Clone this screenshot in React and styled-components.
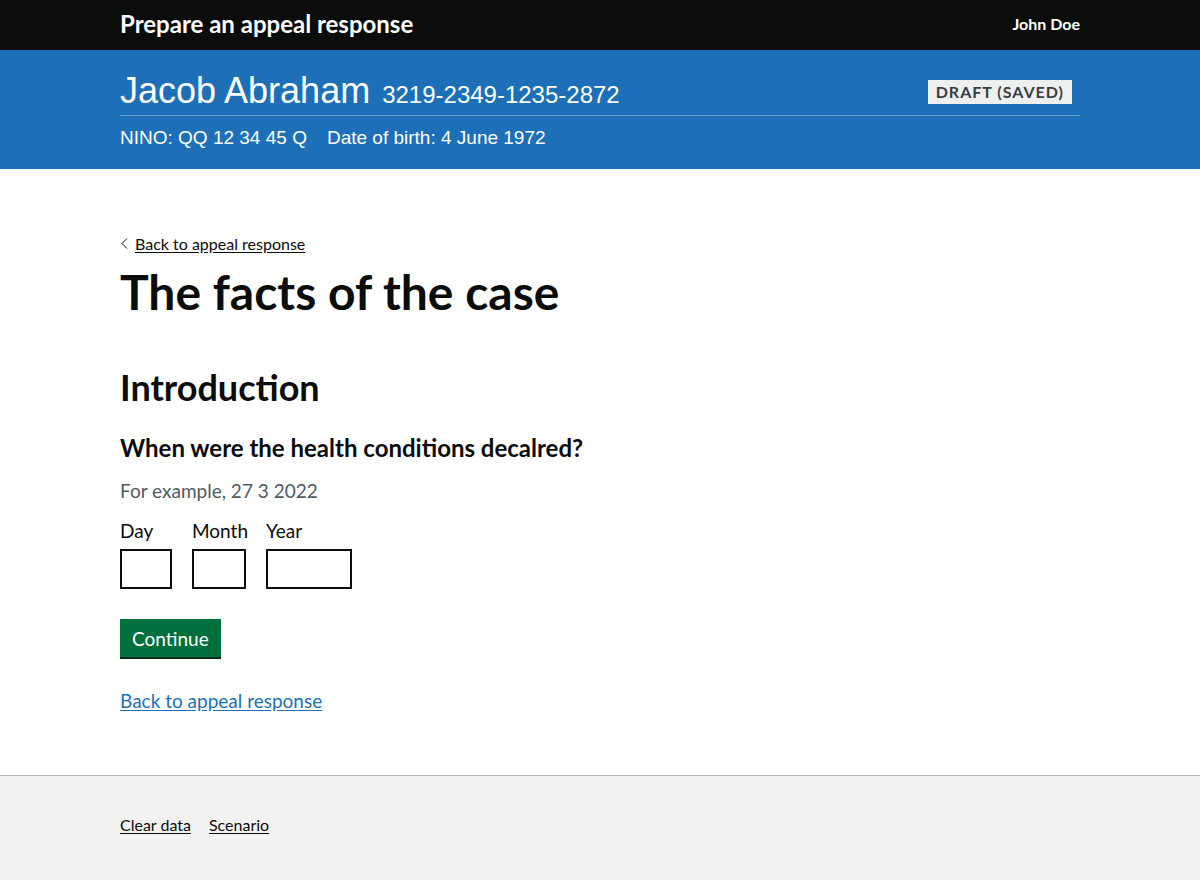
import React from 'react';
import styled, { createGlobalStyle } from 'styled-components';

const GlobalStyle = createGlobalStyle`
  * { box-sizing: border-box; }
  html, body { margin: 0; padding: 0; background: #ffffff; }
  body {
    font-family: Lato, "Noto Sans", Arial, sans-serif;
    color: #0b0c0c;
    -webkit-font-smoothing: antialiased;
  }
`;

const Page = styled.div`
  min-height: 880px;
  display: flex;
  flex-direction: column;
`;

const Width = styled.div`
  width: 960px;
  margin: 0 auto;
`;

// Top black bar
const TopBar = styled.header`
  background: #0b0c0c;
  height: 50px;
`;

const TopInner = styled(Width)`
  height: 100%;
  display: flex;
  align-items: center;
  justify-content: space-between;
  padding-bottom: 4px;
`;

const ServiceName = styled.a`
  color: #ffffff;
  font-weight: 700;
  font-size: 24px;
  text-decoration: none;
`;

const UserName = styled.span`
  color: #ffffff;
  font-weight: 700;
  font-size: 16px;
`;

// Blue case banner
const Banner = styled.div`
  background: #1d70b8;
  height: 119px;
  color: #ffffff;
  font-family: "Liberation Sans", Arial, sans-serif;
`;

const BannerInner = styled(Width)`
  padding-top: 20px;
`;

const BannerTop = styled.div`
  display: flex;
  align-items: flex-start;
  justify-content: space-between;
  border-bottom: 1px solid rgba(255, 255, 255, 0.35);
  height: 46px;
`;

const ClaimantName = styled.h2`
  margin: 0;
  font-size: 36px;
  font-weight: 400;
  line-height: 42px;
`;

const CaseRef = styled.span`
  font-size: 24px;
  margin-left: 2px;
`;

const Tag = styled.strong`
  margin-top: 10px;
  margin-right: 8px;
  background: #eeefef;
  color: #383f43;
  font-family: Lato, "Noto Sans", Arial, sans-serif;
  font-size: 16px;
  font-weight: 700;
  letter-spacing: 1px;
  line-height: 20px;
  padding: 2px 8px 2px 8px;
  text-transform: uppercase;
`;

const Details = styled.div`
  display: flex;
  gap: 20px;
  font-size: 19px;
  line-height: 22px;
  margin-top: 11px;
`;

// Main
const Main = styled.main`
  flex: 1;
  padding-top: 64px;
  padding-bottom: 62px;
`;

const BackLink = styled.a`
  display: inline-flex;
  align-items: center;
  gap: 7px;
  font-size: 16px;
  line-height: 20px;
  color: #0b0c0c;
  text-decoration: underline;
  text-underline-offset: 2px;
  cursor: pointer;
`;

const Chevron = styled.svg`
  width: 7px;
  height: 11px;
  margin-left: 1px;
`;

const Heading = styled.h1`
  margin: 12px 0 0;
  font-size: 48px;
  line-height: 52px;
  font-weight: 700;
`;

const SectionTitle = styled.h2`
  margin: 49px 0 0;
  font-size: 36px;
  line-height: 40px;
  font-weight: 700;
`;

const Question = styled.h3`
  margin: 26px 0 0;
  font-size: 24px;
  line-height: 30px;
  font-weight: 700;
`;

const Hint = styled.div`
  margin-top: 15px;
  font-size: 19px;
  line-height: 25px;
  color: #505a5f;
`;

const DateRow = styled.div`
  display: flex;
  gap: 20px;
  margin-top: 15px;
`;

const DateField = styled.div`
  display: flex;
  flex-direction: column;
  width: ${p => p.w}px;
`;

const Label = styled.label`
  font-size: 19px;
  line-height: 25px;
  margin-bottom: 6px;
  white-space: nowrap;
`;

const DateInput = styled.input`
  width: 100%;
  height: 40px;
  border: 2px solid #0b0c0c;
  border-radius: 0;
  padding: 5px;
  font-size: 19px;
  font-family: inherit;
  background: #ffffff;
`;

const Form = styled.div`
  display: flex;
  flex-direction: column;
`;

const Button = styled.button`
  margin-top: 30px;
  align-self: flex-start;
  background: #00703c;
  color: #ffffff;
  border: none;
  border-radius: 0;
  box-shadow: 0 2px 0 #002d18;
  font-family: inherit;
  font-size: 19px;
  line-height: 25px;
  padding: 7px 12px 6px;
  cursor: pointer;
`;

const TextLink = styled.a`
  display: inline-block;
  margin-top: 31px;
  font-size: 19px;
  line-height: 25px;
  color: #1d70b8;
  text-decoration: underline;
  text-underline-offset: 2px;
  cursor: pointer;
`;

// Footer
const Footer = styled.footer`
  background: #f3f2f1;
  border-top: 1px solid #b1b4b6;
  height: 106px;
`;

const FooterInner = styled(Width)`
  padding-top: 39px;
  display: flex;
  gap: 18px;
`;

const FooterLink = styled.a`
  font-size: 16px;
  line-height: 20px;
  color: #0b0c0c;
  text-decoration: underline;
  text-underline-offset: 2px;
  cursor: pointer;
`;

export default function App() {
  return (
    <Page>
      <GlobalStyle />
      <TopBar>
        <TopInner>
          <ServiceName>Prepare an appeal response</ServiceName>
          <UserName>John Doe</UserName>
        </TopInner>
      </TopBar>
      <Banner>
        <BannerInner>
          <BannerTop>
            <ClaimantName>
              Jacob Abraham <CaseRef>3219-2349-1235-2872</CaseRef>
            </ClaimantName>
            <Tag>Draft (saved)</Tag>
          </BannerTop>
          <Details>
            <span>NINO: QQ 12 34 45 Q</span>
            <span>Date of birth: 4 June 1972</span>
          </Details>
        </BannerInner>
      </Banner>
      <Main>
        <Width>
          <BackLink>
            <Chevron viewBox="0 0 7 11" fill="none">
              <path d="M6 0.5L1 5.5L6 10.5" stroke="#0b0c0c" strokeWidth="1" />
            </Chevron>
            Back to appeal response
          </BackLink>
          <Heading>The facts of the case</Heading>
          <SectionTitle>Introduction</SectionTitle>
          <Question>When were the health conditions decalred?</Question>
          <Hint>For example, 27 3 2022</Hint>
          <Form>
            <DateRow>
              <DateField w={52}>
                <Label htmlFor="d-day">Day</Label>
                <DateInput id="d-day" />
              </DateField>
              <DateField w={54}>
                <Label htmlFor="d-month">Month</Label>
                <DateInput id="d-month" />
              </DateField>
              <DateField w={86}>
                <Label htmlFor="d-year">Year</Label>
                <DateInput id="d-year" />
              </DateField>
            </DateRow>
            <Button>Continue</Button>
          </Form>
          <TextLink>Back to appeal response</TextLink>
        </Width>
      </Main>
      <Footer>
        <FooterInner>
          <FooterLink>Clear data</FooterLink>
          <FooterLink>Scenario</FooterLink>
        </FooterInner>
      </Footer>
    </Page>
  );
}
